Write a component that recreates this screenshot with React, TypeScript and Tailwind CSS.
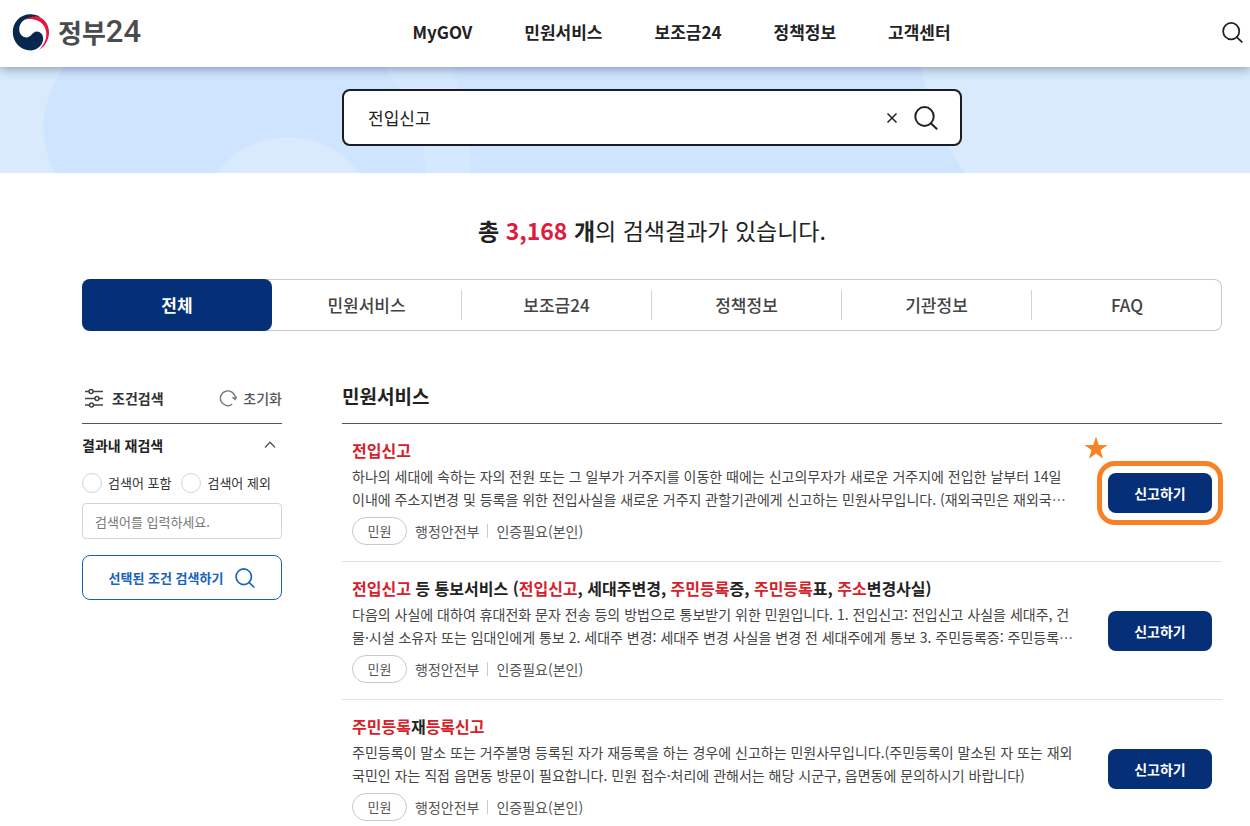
import { useState } from 'react';

interface TitlePart {
    text: string;
    hit?: boolean;
}

interface ServiceItem {
    title: TitlePart[];
    lines: string[];
    featured?: boolean;
}

const menus = ["MyGOV", "민원서비스", "보조금24", "정책정보", "고객센터"];

const tabs = ["전체", "민원서비스", "보조금24", "정책정보", "기관정보", "FAQ"];

const services: ServiceItem[] = [
    {
        title: [{ text: "전입신고", hit: true }],
        lines: [
            "하나의 세대에 속하는 자의 전원 또는 그 일부가 거주지를 이동한 때에는 신고의무자가 새로운 거주지에 전입한 날부터 14일",
            "이내에 주소지변경 및 등록을 위한 전입사실을 새로운 거주지 관할기관에게 신고하는 민원사무입니다. (재외국민은 재외국…",
        ],
        featured: true,
    },
    {
        title: [
            { text: "전입신고", hit: true },
            { text: " 등 통보서비스 (" },
            { text: "전입신고", hit: true },
            { text: ", 세대주변경, " },
            { text: "주민등록", hit: true },
            { text: "증, " },
            { text: "주민등록", hit: true },
            { text: "표, " },
            { text: "주소", hit: true },
            { text: "변경사실)" },
        ],
        lines: [
            "다음의 사실에 대하여 휴대전화 문자 전송 등의 방법으로 통보받기 위한 민원입니다. 1. 전입신고: 전입신고 사실을 세대주, 건",
            "물·시설 소유자 또는 임대인에게 통보 2. 세대주 변경: 세대주 변경 사실을 변경 전 세대주에게 통보 3. 주민등록증: 주민등록…",
        ],
    },
    {
        title: [
            { text: "주민등록", hit: true },
            { text: "재" },
            { text: "등록신고", hit: true },
        ],
        lines: [
            "주민등록이 말소 또는 거주불명 등록된 자가 재등록을 하는 경우에 신고하는 민원사무입니다.(주민등록이 말소된 자 또는 재외",
            "국민인 자는 직접 읍면동 방문이 필요합니다. 민원 접수·처리에 관해서는 해당 시군구, 읍면동에 문의하시기 바랍니다)",
        ],
    },
];

const SearchIcon = ({ className }: { className: string }) => (
    <svg viewBox="0 0 24 24" className={className} fill="none" stroke="currentColor" strokeWidth="2" strokeLinecap="round" aria-hidden="true">
        <ellipse cx="10.5" cy="10.5" rx="9.2" ry="9.4" />
        <path d="M16.8 17.2 22.6 22.8" />
    </svg>
);

const Logo = () => (
    <a href="#" className="flex items-center gap-2 text-[#4b4b4d]">
        <svg viewBox="0 0 38 37" className="h-[37px] w-[38px]" aria-hidden="true">
            <path fill="#e4183c" d="M12 6C17 1 25 .8 30 4.5C35 8 37.5 14 37 20C36.3 27 32.5 33 26.5 36.2C31.5 31.5 34.5 26 34.3 19.5C34 12 29 6.8 22 5.5C18 4.8 14.5 5 12 6Z" />
            <path fill="#06284f" d="M28.5 3.2C21-1.5 11-.3 5.5 5.8C-.8 12.5-.7 23.5 5.2 30.2C9 34.6 14 36.5 19 36.4C26 35.8 31.2 30.5 31.2 24.5C31.2 20.5 28.2 17.6 24.8 17.6C20.5 17.6 19.5 23.2 14.8 23.4C10.3 23.5 7.2 19.8 7.2 15.3C7.2 9.5 11.5 5.2 17 3.5C20.8 2.4 25 2.3 28.5 3.2Z" />
        </svg>
        <span className="flex items-center font-bold leading-8">
            <span className="text-[26px]">정부</span>
            <span className="font-['Roboto',sans-serif] text-[31px] font-medium">24</span>
        </span>
    </a>
);

const Header = () => (
    <header className="relative z-10 flex h-[67px] items-center bg-white pr-[7px] pb-[3px] pl-3 shadow-[0_2px_10px_rgba(40,60,100,0.45)]">
        <Logo />
        <nav className="flex flex-1 items-center justify-center gap-[52px] text-[17px] font-bold text-[#222]">
            {menus.map((menu) => (
                <a key={menu} href="#">{menu}</a>
            ))}
        </nav>
        <button type="button" aria-label="검색" className="text-[#222]">
            <SearchIcon className="h-[21px] w-[21px]" />
        </button>
    </header>
);

const SearchBanner = () => {
    const [query, setQuery] = useState("전입신고");

    return (
        <section className="relative flex h-[106px] items-center justify-center overflow-hidden bg-[#d9eafd] pt-[22px] pb-[27px] pl-[54px]">
            <svg viewBox="0 0 1250 106" preserveAspectRatio="none" className="absolute inset-0 h-full w-full" aria-hidden="true">
                <path fill="#cfe4fe" d="M64 0C40 36 37 70 55 106H965C940 70 928 40 921 0Z" />
                <path fill="#d5e8fe" d="M384 0C410 32 424 66 426 106H470C471 66 464 30 452 0Z" />
                <circle cx="288" cy="158" r="88" fill="#d9eafd" />
            </svg>
            <form
                className="relative flex h-[57px] w-[620px] items-center rounded-lg border-2 border-[#1b1c24] bg-white pr-[22px] pl-6"
                onSubmit={(e) => e.preventDefault()}
            >
                <input
                    type="text"
                    aria-label="검색어"
                    value={query}
                    onChange={(e) => setQuery(e.target.value)}
                    className="min-w-0 flex-1 text-[17px] text-[#222] outline-none"
                />
                <button type="button" aria-label="지우기" onClick={() => setQuery("")} className="mr-4 text-[#222]">
                    <svg viewBox="0 0 12 12" className="h-3 w-3" fill="none" stroke="currentColor" strokeWidth="1.5" aria-hidden="true">
                        <path d="M1.5 1.5 10.5 10.5M10.5 1.5 1.5 10.5" />
                    </svg>
                </button>
                <button type="submit" aria-label="검색" className="text-[#222]">
                    <SearchIcon className="h-6 w-6" />
                </button>
            </form>
        </section>
    );
};

const CategoryTabs = () => {
    const [active, setActive] = useState(0);

    return (
        <div role="tablist" className="grid h-[52px] grid-cols-6 rounded-lg bg-white text-[17px] font-medium text-[#444] inset-ring inset-ring-[#c9c9c9]">
            {tabs.map((tab, i) => (
                <button
                    key={tab}
                    type="button"
                    role="tab"
                    aria-selected={active === i}
                    onClick={() => setActive(i)}
                    className={active === i ? "rounded-lg bg-[#052f76] font-bold text-white" : "flex items-center"}
                >
                    <span className="flex-1">{tab}</span>
                    {active !== i && i < tabs.length - 1 && <span className="h-[30px] w-px bg-[#d4d4d4]" />}
                </button>
            ))}
        </div>
    );
};

const FilterPanel = () => (
    <aside className="w-[200px] shrink-0">
        <div className="flex h-[50px] items-center justify-between border-b border-[#555] pb-[2px] text-sm text-[#333]">
            <h2 className="flex items-center gap-2 pl-[2px] font-bold">
                <svg viewBox="0 0 20 20" className="h-5 w-5" fill="#fff" stroke="#444" strokeWidth="1.5" aria-hidden="true">
                    <path d="M1 3.5H19M1 10.5H19M1 17H19" />
                    <circle cx="7" cy="3.5" r="2" />
                    <circle cx="13" cy="10.5" r="2" />
                    <circle cx="7.5" cy="17" r="2" />
                </svg>
                조건검색
            </h2>
            <button type="reset" form="refine" className="flex items-center gap-[6px] font-medium text-[#555]">
                <svg viewBox="0 0 18 18" className="h-[18px] w-[18px]" fill="none" stroke="#777" strokeWidth="1.4" aria-hidden="true">
                    <path d="M13.2 15.2A7.4 7.4 0 1 1 16.2 9.5M13.4 8.2 16.2 10.4 17.7 7.5" />
                </svg>
                초기화
            </button>
        </div>
        <form id="refine" onSubmit={(e) => e.preventDefault()}>
            <button type="button" aria-expanded="true" className="flex h-[44px] w-full items-center justify-between pr-[6px] pb-[2px] text-sm font-bold text-[#222]">
                결과내 재검색
                <svg viewBox="0 0 12 8" className="h-2 w-3" fill="none" stroke="#555" strokeWidth="1.3" aria-hidden="true">
                    <path d="M1 6.5 6 1.3 11 6.5" />
                </svg>
            </button>
            <div className="flex h-[30px] items-center gap-[10px] text-[13px] text-[#333]">
                <label className="flex items-center gap-[6px]">
                    <input type="radio" name="refine" className="h-5 w-5 appearance-none rounded-full border border-[#d4d4d4] checked:border-[6px] checked:border-[#1565c0]" />
                    검색어 포함
                </label>
                <label className="flex items-center gap-[6px]">
                    <input type="radio" name="refine" className="h-5 w-5 appearance-none rounded-full border border-[#d4d4d4] checked:border-[6px] checked:border-[#1565c0]" />
                    검색어 제외
                </label>
            </div>
            <input
                type="text"
                aria-label="재검색어"
                placeholder="검색어를 입력하세요."
                className="mt-[5px] h-9 w-full rounded border border-[#d4d4d4] px-3 text-[13px] placeholder:text-[#777]"
            />
            <button type="submit" className="mt-4 flex h-[45px] w-full items-center justify-center gap-3 rounded-lg border border-[#1763b0] text-[13px] font-bold text-[#1763c0]">
                선택된 조건 검색하기
                <SearchIcon className="h-5 w-5" />
            </button>
        </form>
    </aside>
);

const ServiceRow = ({ item }: { item: ServiceItem }) => (
    <li className="flex items-center justify-between gap-4 border-b border-[#e0e0e0] px-[10px] pt-[14px] pb-4">
        <div className="min-w-0">
            <h3 className="text-base leading-6 font-bold text-[#222]">
                <a href="#">
                    {item.title.map((part, i) => (
                        <span key={i} className={part.hit ? "text-[#d8202a]" : ""}>{part.text}</span>
                    ))}
                </a>
            </h3>
            <p className="mt-[3px] text-sm leading-[23px] text-[#444]">
                {item.lines.map((line) => (
                    <span key={line} className="block">{line}</span>
                ))}
            </p>
            <div className="mt-[6px] flex items-center text-sm text-[#555]">
                <span className="mr-2 flex h-7 w-[55px] items-center justify-center rounded-full border border-[#c8c8c8] text-[13px]">민원</span>
                <span>행정안전부</span>
                <span className="mx-2 h-[14px] w-px bg-[#ccc]" />
                <span>인증필요(본인)</span>
            </div>
        </div>
        <div className="relative mt-[2px] shrink-0">
            <button type="button" className="block h-10 w-[104px] rounded-lg bg-[#052f76] text-sm font-bold text-white">신고하기</button>
            {item.featured && (
                <>
                    <span className="pointer-events-none absolute -inset-x-[11px] -inset-y-3 rounded-[18px] border-5 border-[#f98125]" />
                    <svg viewBox="0 0 24 24" className="absolute -top-[37px] -left-6 h-6 w-6" fill="#f98125" aria-hidden="true">
                        <path d="M12 .5 14.7 9H23.5L16.4 14.2 19.1 22.8 12 17.5 4.9 22.8 7.6 14.2.5 9H9.3Z" />
                    </svg>
                </>
            )}
        </div>
    </li>
);

export default function App() {
    return (
        <div lang="ko" className="h-screen overflow-hidden bg-white font-['Noto_Sans_CJK_KR',sans-serif]">
            <Header />
            <SearchBanner />
            <main className="pr-7 pl-[82px]">
                <h1 className="flex h-[106px] items-center justify-center pt-2 text-[23px] text-[#222]">
                    <span>
                        <strong>총 <span className="text-[#e01a3c]">3,168</span> 개</strong>의 검색결과가 있습니다.
                    </span>
                </h1>
                <CategoryTabs />
                <div className="flex gap-[60px] pt-[43px]">
                    <FilterPanel />
                    <section className="min-w-0 flex-1">
                        <h2 className="flex h-[50px] items-center border-b border-[#555] pb-1 text-[19px] font-bold text-[#222]">민원서비스</h2>
                        <ul>
                            {services.map((item) => (
                                <ServiceRow key={item.lines[0]} item={item} />
                            ))}
                        </ul>
                    </section>
                </div>
            </main>
        </div>
    );
}
